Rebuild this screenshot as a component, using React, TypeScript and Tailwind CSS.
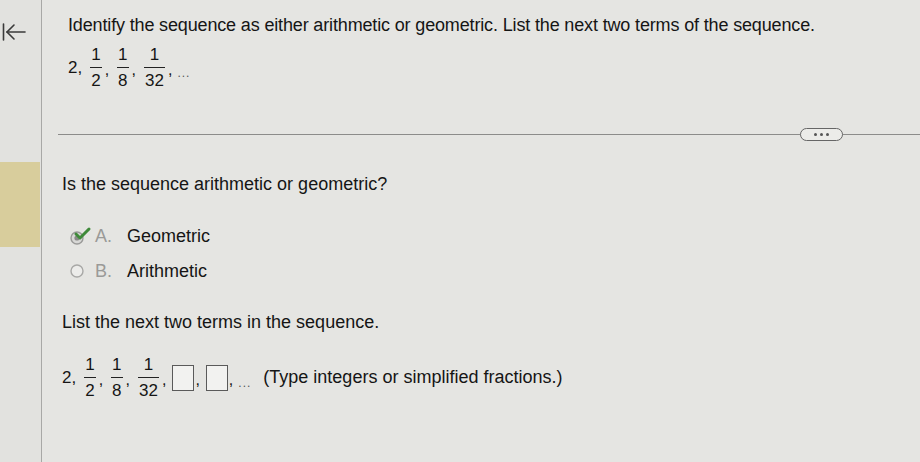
import React from "react";

function Frac({ n, d }: { n: string; d: string }) {
  return (
    <span className="inline-flex flex-col items-center align-middle leading-none text-[17px] mx-[3px]">
      <span className="px-[1px] pb-[4px]">{n}</span>
      <span className="w-full border-t border-[#222]" />
      <span className="px-[1px] pt-[4px]">{d}</span>
    </span>
  );
}

function Comma() {
  return <span className="text-[16px] self-end mb-[7px] mr-[5px]">,</span>;
}

function Sequence({ children }: { children?: React.ReactNode }) {
  return (
    <div className="flex items-center text-[17px] text-[#151515]">
      <span className="mr-[5px]">2,</span>
      <Frac n="1" d="2" />
      <Comma />
      <Frac n="1" d="8" />
      <Comma />
      <Frac n="1" d="32" />
      <Comma />
      {children}
    </div>
  );
}

function AnswerBox() {
  return <span className="inline-block w-[22px] h-[26px] border border-[#5a5a5a] bg-[#f2f2f0] mx-[1px]" />;
}

export default function App() {
  return (
    <div
      className="w-[920px] h-[462px] flex bg-[#e5e5e2] text-[#151515] overflow-hidden"
      style={{ fontFamily: '"Liberation Sans", Arial, sans-serif' }}
    >
      {/* left rail */}
      <div className="w-[42px] shrink-0 border-r border-[#a8a8a6] bg-[#e2e2df] flex flex-col">
        <div className="mt-[23px] ml-[2px] flex items-center">
          <svg width="24" height="18" viewBox="0 0 24 18" fill="none" stroke="#3a3a3a" strokeWidth="1.6" strokeLinecap="round">
            <path d="M1.5 1 V17" />
            <path d="M12 2 L5 9 L12 16" />
            <path d="M5 9 H23" />
          </svg>
        </div>
        <div className="mt-[121px] h-[85px] w-[40px] bg-[#d8cd9c]" />
      </div>

      {/* main */}
      <div className="flex-1 flex flex-col">
        <div className="pl-[26px] pt-[15px]">
          <p className="text-[18px] leading-[20px] tracking-[-0.15px]">
            Identify the sequence as either arithmetic or geometric. List the next two terms of the sequence.
          </p>
          <div className="mt-[11px]">
            <Sequence>
              <span className="self-end mb-[7px] text-[12px] tracking-[1px] text-[#555]">...</span>
            </Sequence>
          </div>
        </div>

        <div className="mt-[45px] ml-[16px] relative border-t border-[#8c8c8a]">
          <div className="absolute left-[742px] top-[-7px] w-[43px] h-[13px] rounded-full border-[1.5px] border-[#666] bg-[#ecece9] flex items-center justify-center gap-[3px]">
            <span className="w-[3px] h-[3px] rounded-full bg-[#555]" />
            <span className="w-[3px] h-[3px] rounded-full bg-[#555]" />
            <span className="w-[3px] h-[3px] rounded-full bg-[#555]" />
          </div>
        </div>

        <div className="pl-[20px]">
          <p className="mt-[39px] text-[18px] leading-[20px]">Is the sequence arithmetic or geometric?</p>

          <div className="mt-[32px] flex flex-col gap-[15px] text-[18px] leading-[20px]">
            <div className="flex items-center">
              <svg width="30" height="20" viewBox="0 0 30 20" className="ml-[4px]">
                <circle cx="11" cy="12" r="6" fill="#d8d8d6" stroke="#9a9a98" strokeWidth="1.4" />
                <circle cx="11" cy="12" r="2.6" fill="#8a8a88" />
                <path d="M10 8 L14 12 L23 3" fill="none" stroke="#3f8a3a" strokeWidth="3" strokeLinecap="round" strokeLinejoin="round" />
              </svg>
              <span className="ml-[-1px] w-[32px] text-[#9a9a98]">A.</span>
              <span>Geometric</span>
            </div>
            <div className="flex items-center">
              <svg width="30" height="20" viewBox="0 0 30 20" className="ml-[4px]">
                <circle cx="11" cy="10" r="6" fill="#ececea" stroke="#a8a8a6" strokeWidth="1.4" />
              </svg>
              <span className="ml-[-1px] w-[32px] text-[#9a9a98]">B.</span>
              <span>Arithmetic</span>
            </div>
          </div>

          <p className="mt-[31px] text-[18px] leading-[20px]">List the next two terms in the sequence.</p>

          <div className="mt-[24px]">
            <Sequence>
              <AnswerBox />
              <Comma />
              <AnswerBox />
              <Comma />
              <span className="self-end mb-[7px] text-[12px] tracking-[1px] text-[#555] mr-[12px]">...</span>
              <span className="text-[18px]">(Type integers or simplified fractions.)</span>
            </Sequence>
          </div>
        </div>
      </div>
    </div>
  );
}
